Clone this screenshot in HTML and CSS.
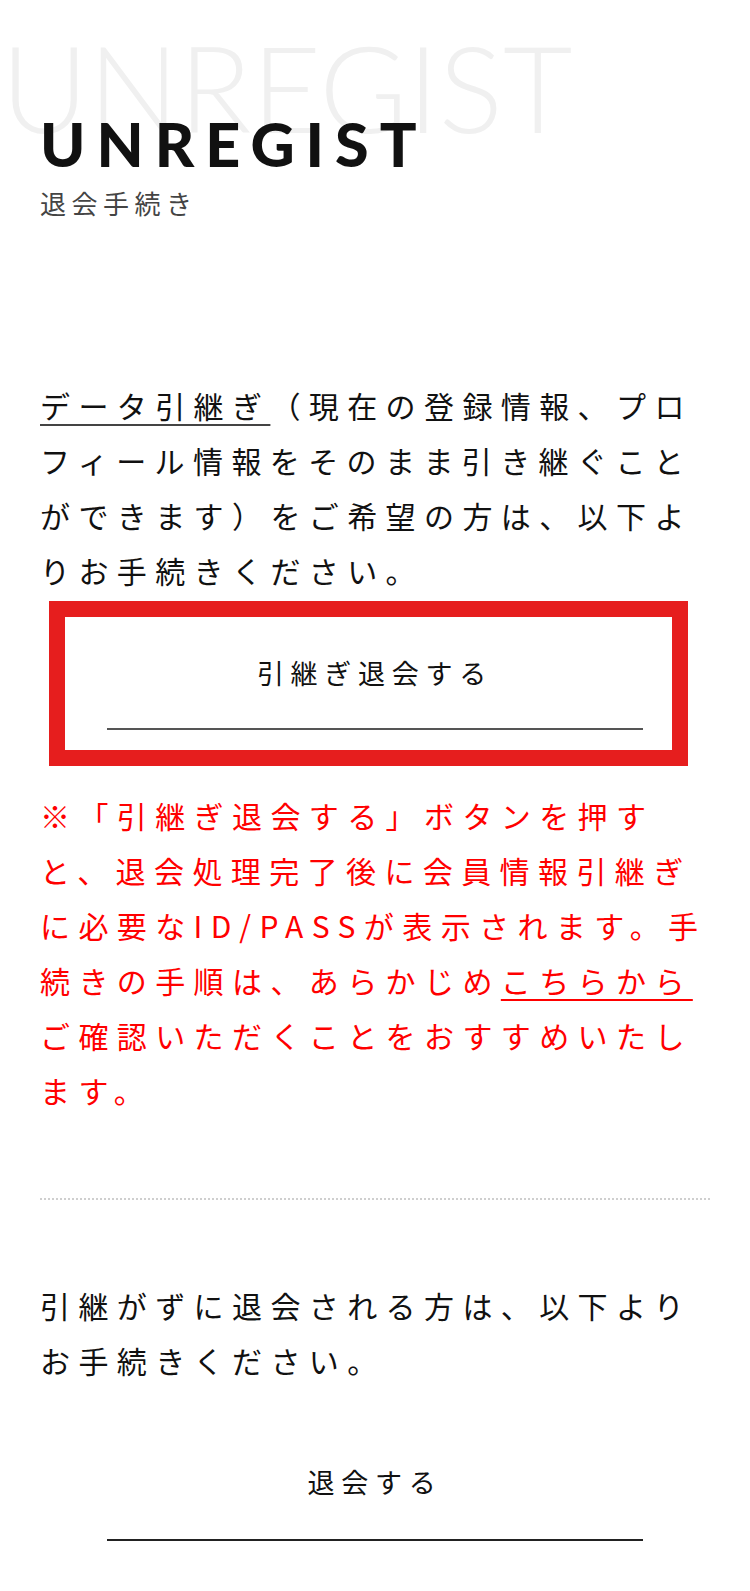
FILE: index.html
```html
<!DOCTYPE html>
<html lang="ja">
<head>
<meta charset="utf-8">
<title>UNREGIST 退会手続き</title>
<link rel="stylesheet" href="styles.css">
</head>
<body>
<main class="page">
  <header class="page-head">
    <div class="head-bg" aria-hidden="true">UNREGIST</div>
    <h1 class="head-title">UNREGIST</h1>
    <p class="head-sub">退会手続き</p>
  </header>

  <section class="block">
    <p class="lead"><a class="link" href="#">データ引継ぎ</a>（現在の登録情報、プロフィール情報をそのまま引き継ぐことができます）をご希望の方は、以下よりお手続きください。</p>
    <div class="btn-wrap">
      <a class="btn" href="#">引継ぎ退会する</a>
      <span class="highlight" aria-hidden="true"></span>
    </div>
    <p class="note">※「引継ぎ退会する」ボタンを押すと、退会処理完了後に会員情報引継ぎに必要なID/PASSが表示されます。手続きの手順は、あらかじめ<a class="note-link" href="#">こちらから</a>ご確認いただくことをおすすめいたします。</p>
  </section>

  <hr class="sep">

  <section class="block block-2">
    <p class="lead">引継がずに退会される方は、以下よりお手続きください。</p>
    <div class="btn-wrap btn-wrap-2">
      <a class="btn btn-dark" href="#">退会する</a>
    </div>
  </section>
</main>
</body>
</html>
```

FILE: styles.css
```css
html, body {
  margin: 0;
  padding: 0;
  background: #fff;
}

body {
  font-family: "Noto Sans CJK JP", "Noto Sans", sans-serif;
  color: #111;
}

.page {
  padding: 0 40px;
}

.page-head {
  position: relative;
  padding-top: 113px;
  height: 378px;
  box-sizing: border-box;
}

.head-bg {
  position: absolute;
  left: -39px;
  top: 27px;
  font-family: "Lato", "Liberation Sans", sans-serif;
  font-weight: 300;
  font-size: 120px;
  line-height: 1;
  letter-spacing: 0;
  color: #f0f0f0;
  white-space: nowrap;
}

.head-title {
  position: relative;
  margin: 0;
  font-family: "Lato", "Liberation Sans", sans-serif;
  font-weight: 900;
  font-size: 61px;
  line-height: 1;
  letter-spacing: 11px;
  color: #111;
}

.head-sub {
  position: relative;
  margin: 11px 0 0;
  font-size: 26px;
  line-height: 36px;
  letter-spacing: 5.5px;
  color: #444;
}

.lead,
.note {
  margin: 0;
  font-size: 30px;
  line-height: 55px;
  letter-spacing: 8.4px;
}

.link {
  color: #111;
  text-decoration: underline;
  text-decoration-thickness: 2px;
  text-underline-offset: 6px;
  text-decoration-color: #444;
}

.btn-wrap {
  position: relative;
  padding-top: 48px;
}

.btn {
  display: block;
  width: 536px;
  margin: 0 auto;
  padding-bottom: 28px;
  border-bottom: 2px solid #555;
  text-align: center;
  font-size: 27px;
  line-height: 54px;
  letter-spacing: 6.75px;
  color: #111;
  text-decoration: none;
}

.highlight {
  position: absolute;
  left: 9px;
  right: 22px;
  top: 3px;
  height: 133px;
  border: 16px solid #e61e1e;
  pointer-events: none;
}

.note {
  margin-top: 58px;
  color: #ff0000;
}

.note-link {
  color: #ff0000;
  text-decoration: underline;
  text-decoration-thickness: 2px;
  text-underline-offset: 6px;
}

.sep {
  margin: 80px 0 0;
  border: 0;
  border-top: 2px dotted #cfcfcf;
  height: 0;
}

.block-2 {
  padding-top: 78px;
}

.btn-wrap-2 {
  padding-top: 67px;
}

.btn-dark {
  border-bottom-color: #222;
  padding-bottom: 30px;
}
```
